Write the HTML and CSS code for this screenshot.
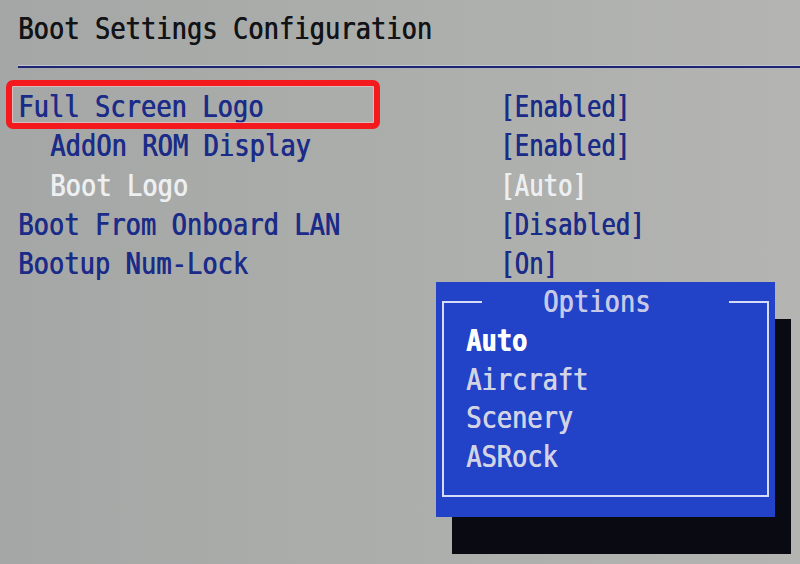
FILE: index.html
```html
<!DOCTYPE html>
<html>
<head>
	<title>Boot Settings Configuration</title>
<link rel="stylesheet" href="styles.css">
</head>
<body>
	<div class="screen">
		<div class="title"><span class="txt">Boot Settings Configuration</span></div>
		<div class="rule"></div>
		<div class="settings">
			<div class="row selected">
				<span class="label"><span class="txt">Full Screen Logo</span></span>
				<span class="value"><span class="txt">[Enabled]</span></span>
			</div>
			<div class="row sub">
				<span class="label"><span class="txt">AddOn ROM Display</span></span>
				<span class="value"><span class="txt">[Enabled]</span></span>
			</div>
			<div class="row sub active">
				<span class="label"><span class="txt">Boot Logo</span></span>
				<span class="value"><span class="txt">[Auto]</span></span>
			</div>
			<div class="row">
				<span class="label"><span class="txt">Boot From Onboard LAN</span></span>
				<span class="value"><span class="txt">[Disabled]</span></span>
			</div>
			<div class="row">
				<span class="label"><span class="txt">Bootup Num-Lock</span></span>
				<span class="value"><span class="txt">[On]</span></span>
			</div>
		</div>

		<div class="popup">
			<div class="frame">
				<div class="frame-title"><span class="txt">Options</span></div>
				<ul class="options">
					<li class="current"><span class="txt">Auto</span></li>
					<li><span class="txt">Aircraft</span></li>
					<li><span class="txt">Scenery</span></li>
					<li><span class="txt">ASRock</span></li>
				</ul>
			</div>
		</div>
	</div>
</body>
</html>
```

FILE: styles.css
```css
body {
	margin: 0;
	padding: 0;
	font-family: "DejaVu Sans Mono", "Liberation Mono", monospace;
	font-size: 30px;
}

.screen {
	position: relative;
	width: 800px;
	height: 564px;
	overflow: hidden;
	box-sizing: border-box;
	padding: 9px 0 0 18px;
	background: linear-gradient(90deg, #a5a7a6 0%, #acaeac 50%, #b4b5b3 100%);
}

/* bios glyphs are tall, narrow and a bit heavy */
.txt {
	display: inline-block;
	white-space: nowrap;
	transform: scaleX(0.849);
	transform-origin: left center;
	text-shadow: 0.8px 0 0 currentColor;
}

.title {
	height: 39px;
	line-height: 39px;
	color: #121316;
}

.rule {
	margin-top: 18px;
	height: 2px;
	background-color: #1c2476;
	box-shadow: 0 -1px 0 #c2c4cc;
}

.settings {
	margin-top: 19px;
}

.row {
	display: grid;
	grid-template-columns: 482px 1fr;
	line-height: 39.3px;
	color: #1b2b88;
}

.row.sub .label {
	padding-left: 32px;
}

.row.active {
	color: #eeeff1;
}

.value .txt {
	transform: scaleX(0.80);
}

.row.selected {
	position: relative;
}

.row.selected::after {
	content: "";
	position: absolute;
	top: -7px;
	left: -12px;
	width: 374px;
	height: 49px;
	box-sizing: border-box;
	border: 6px solid #f3191d;
	border-radius: 7px;
	box-shadow: inset 0 0 0 1px rgba(236, 196, 196, 0.7);
}

.popup {
	position: absolute;
	left: 436px;
	top: 282px;
	width: 339px;
	height: 235px;
	background-color: #2242c8;
	box-shadow: 16px 37px 0 #0a0b12;
}

.frame {
	margin: 19px 6px 0;
	height: 196px;
	box-sizing: border-box;
	border: 2px solid #d4dcf8;
}

.frame-title {
	height: 39px;
	line-height: 39px;
	margin: -21px 0 0 38px;
	width: 247px;
	box-sizing: border-box;
	padding-left: 61px;
	background-color: #2242c8;
	color: #c6cae8;
}

.options {
	list-style: none;
	margin: 1px 0 0;
	padding: 0 0 0 22px;
}

.options li {
	line-height: 38.7px;
	color: #d2d4e6;
}

.options li .txt {
	transform: scaleX(0.845);
}

.options li.current {
	color: #ffffff;
	font-weight: bold;
}
```
